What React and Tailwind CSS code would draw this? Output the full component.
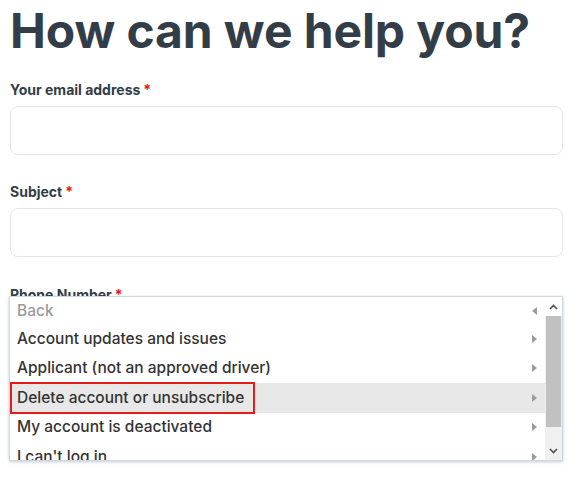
import { Fragment } from 'react';

const items = [
  'Account updates and issues',
  'Applicant (not an approved driver)',
  'Delete account or unsubscribe',
  'My account is deactivated',
  "I can't log in",
];

function Field(props) {
  return (
    <div className={props.className}>
      <label className="block text-[14px] font-bold leading-4 text-[#333d47]">
        {props.label}
        <span className="ml-[3px] text-[#e5141e]">*</span>
      </label>
      <div className="mt-[8px] h-[49px] rounded-lg border border-[#e3e6ea] bg-white"></div>
    </div>
  );
}

function Tri(props) {
  if (props.left) {
    return (
      <svg width="5" height="8" viewBox="0 0 5 8" className="fill-[#9a9a9a]">
        <path d="M5 0 L0 4 L5 8 Z" />
      </svg>
    );
  }
  return (
    <svg width="5" height="8" viewBox="0 0 5 8" className="fill-[#9a9a9a]">
      <path d="M0 0 L5 4 L0 8 Z" />
    </svg>
  );
}

function Dropdown() {
  return (
    <div className="absolute left-[9px] top-[296px] flex h-[165px] w-[554px] overflow-hidden border border-[#cfd8e0] bg-white shadow-[0_1px_3px_rgba(80,110,140,0.35)]">
      <div className="flex-1 overflow-hidden">
        <div className="flex h-[27px] items-center justify-between pl-[7px] pr-[8px]">
          <span className="text-[15.5px] font-medium text-[#9b9b9b]">Back</span>
          <Tri left />
        </div>
        {items.map((item) => (
          <div
            key={item}
            className={
              'flex h-[29.5px] items-center justify-between pl-[7px] pr-[8px] ' +
              (item === 'Delete account or unsubscribe' ? 'bg-[#e8e8e8]' : '')
            }
          >
            <span
              className={
                'text-[15.5px] font-medium leading-[18px] text-[#333] ' +
                (item === 'Delete account or unsubscribe'
                  ? 'pr-[4px] outline-2 outline-[#e31b1b] outline-offset-[5px]'
                  : '')
              }
            >
              {item}
            </span>
            <Tri />
          </div>
        ))}
      </div>
      <div className="flex w-[17px] flex-col bg-[#f0f0f0]">
        <div className="flex h-[19px] items-center justify-center bg-white">
          <svg width="9" height="6" viewBox="0 0 9 6" fill="none" stroke="#505050" strokeWidth="1.6">
            <path d="M1 5 L4.5 1.5 L8 5" />
          </svg>
        </div>
        <div className="mx-[1px] h-[111px] bg-[#c1c1c1]"></div>
        <div className="flex-1"></div>
        <div className="flex h-[19px] items-center justify-center">
          <svg width="9" height="6" viewBox="0 0 9 6" fill="none" stroke="#505050" strokeWidth="1.6">
            <path d="M1 1 L4.5 4.5 L8 1" />
          </svg>
        </div>
      </div>
    </div>
  );
}

export default function App() {
  return (
    <Fragment>
      <div className="relative h-[482px] overflow-hidden bg-white pl-[10px] pr-[14px] pt-[3px] font-['Inter',sans-serif]">
        <h1 className="text-[48px] font-bold leading-[56px] tracking-[-0.1px] text-[#333d47]">
          How can we help you?
        </h1>
        <Field className="mt-[23px]" label="Your email address" />
        <Field className="mt-[29px]" label="Subject" />
        <Field className="mt-[30px]" label="Phone Number" />
        <Dropdown />
      </div>
    </Fragment>
  );
}
